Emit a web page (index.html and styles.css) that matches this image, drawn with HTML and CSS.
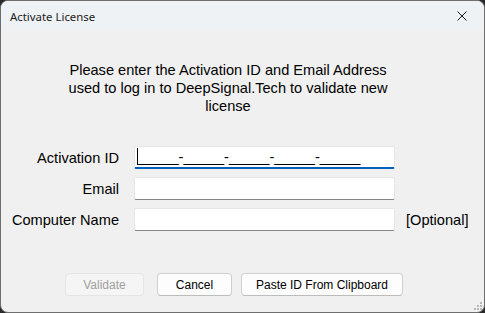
FILE: index.html
```html
<!DOCTYPE html>
<html lang="en">
<head>
  <meta charset="UTF-8">
  <title>Activate License</title>
  <link rel="stylesheet" href="styles.css">
</head>
<body>
  <div class="window">
    <div class="titlebar">
      <span class="title">Activate License</span>
      <button class="close" title="Close">
        <svg viewBox="0 0 10 10" width="10" height="10">
          <path d="M0.5 0.5L9.5 9.5M9.5 0.5L0.5 9.5" stroke="#1a1a1a" stroke-width="1" fill="none"/>
        </svg>
      </button>
    </div>

    <div class="content">
      <p class="intro">Please enter the Activation ID and Email Address used to log in to DeepSignal.Tech to validate new license</p>

      <div class="form">
        <label class="label">Activation ID</label>
        <div class="field focused"><span class="caret"></span><span class="mask">_____-_____-_____-_____-_____</span></div>
        <span></span>

        <label class="label">Email</label>
        <input class="field" type="text">
        <span></span>

        <label class="label">Computer Name</label>
        <input class="field" type="text">
        <span class="hint">[Optional]</span>
      </div>

      <div class="buttons">
        <button class="btn validate" disabled>Validate</button>
        <button class="btn cancel">Cancel</button>
        <button class="btn paste">Paste ID From Clipboard</button>
      </div>
    </div>

    <svg class="grip" viewBox="0 0 10 10" width="10" height="10">
      <rect x="7" y="1" width="2" height="2" fill="#b8b8b8"/>
      <rect x="4" y="4" width="2" height="2" fill="#b8b8b8"/>
      <rect x="7" y="4" width="2" height="2" fill="#b8b8b8"/>
      <rect x="1" y="7" width="2" height="2" fill="#b8b8b8"/>
      <rect x="4" y="7" width="2" height="2" fill="#b8b8b8"/>
      <rect x="7" y="7" width="2" height="2" fill="#b8b8b8"/>
    </svg>
  </div>
</body>
</html>
```

FILE: styles.css
```css
* {
  margin: 0;
  padding: 0;
  box-sizing: border-box;
}

body {
  width: 485px;
  height: 313px;
  background: #2a2a2a;
  font-family: 'Liberation Sans', Arial, sans-serif;
  color: #000;
  overflow: hidden;
}

.window {
  position: relative;
  width: 485px;
  height: 313px;
  border: 1px solid #6e6e6e;
  border-radius: 8px;
  background: #f0f0f0;
  overflow: hidden;
  display: flex;
  flex-direction: column;
}

.titlebar {
  height: 30px;
  background: #eef2f5;
  display: flex;
  align-items: center;
  justify-content: space-between;
  padding-left: 9px;
  flex-shrink: 0;
}

.title {
  font-family: 'Noto Sans', sans-serif;
  font-size: 11.4px;
  color: #1a1a1a;
}

.close {
  width: 46px;
  height: 30px;
  border: none;
  background: transparent;
  display: flex;
  align-items: center;
  justify-content: center;
  padding-left: 1px;
}

.content {
  flex: 1;
  display: flex;
  flex-direction: column;
}

.intro {
  width: 340px;
  margin: 30px 0 0 57px;
  font-size: 14.6px;
  line-height: 18px;
  text-align: center;
}

.form {
  display: grid;
  grid-template-columns: 118px 261px auto;
  column-gap: 15px;
  row-gap: 8px;
  margin-top: 31px;
  align-items: center;
}

.form .hint {
  margin-left: -4px;
  font-size: 14.6px;
}

.label {
  font-size: 14.6px;
  text-align: right;
}

.field {
  height: 23px;
  background: #fff;
  border: 1px solid #e6e6e6;
  border-bottom: 1px solid #868686;
  border-radius: 2px;
  font-family: inherit;
  font-size: 14.6px;
  outline: none;
}

.field.focused {
  border-bottom: 2px solid #005fb8;
  display: flex;
  align-items: flex-end;
  padding-left: 2px;
}

.caret {
  width: 1px;
  height: 17px;
  background: #000;
  margin-bottom: 2px;
}

.mask {
  font-size: 14.6px;
  line-height: 19px;
  white-space: nowrap;
}

.buttons {
  display: flex;
  margin: 42px 0 0 64px;
}

.btn {
  height: 23px;
  font-family: inherit;
  font-size: 12px;
  color: #000;
  background: #fdfdfd;
  border: 1px solid #d0d0d0;
  border-bottom-color: #bcbcbc;
  border-radius: 4px;
}

.validate {
  width: 79px;
  margin-right: 13px;
  background: #f5f5f5;
  border-color: #e5e5e5;
  color: #a0a0a0;
}

.cancel {
  width: 75px;
  margin-right: 9px;
}

.paste {
  width: 162px;
}

.grip {
  position: absolute;
  right: 1px;
  bottom: 1px;
}
```
